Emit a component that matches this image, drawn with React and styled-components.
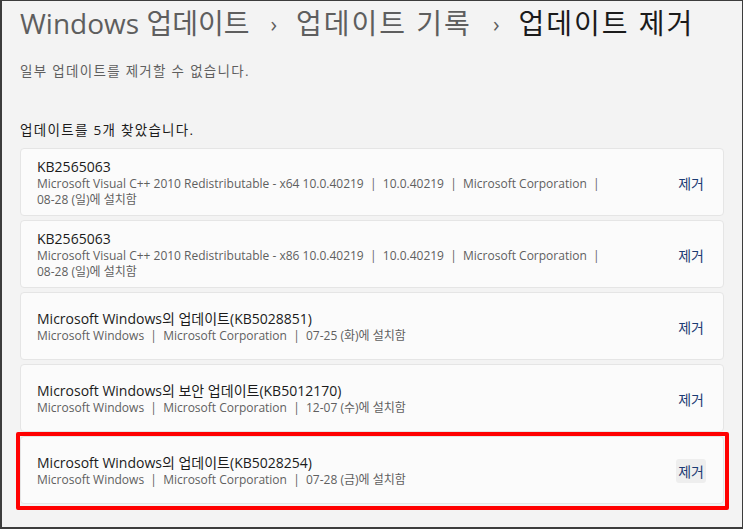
import styled, { createGlobalStyle } from 'styled-components';

const GlobalStyle = createGlobalStyle`
  html, body {
    margin: 0;
    padding: 0;
    background: #f3f3f3;
  }
  body {
    font-family: "Open Sans", "Noto Sans CJK KR", sans-serif;
  }
`;

// 바깥 프레임 (스크린샷 테두리)
const Frame = styled.div`
  width: 743px;
  height: 529px;
  box-sizing: border-box;
  border: 1px solid #3c3c3c;
  border-left-width: 2px;
  border-bottom-width: 2px;
  background: #f3f3f3;
  overflow: hidden;
  padding: 0 18px 0 18px;
`;

const Breadcrumb = styled.h1`
  margin: 0;
  padding: 3px 0 0 0;
  display: flex;
  align-items: center;
  gap: 12px;
  font-weight: 400;
  font-size: 28px;
  line-height: 38px;
  white-space: nowrap;
`;

const Crumb = styled.span`
  color: ${(props) => (props.$current ? '#1b1b1b' : '#5e5e5e')};
  letter-spacing: ${(props) => props.$spacing ?? 2}px;
`;

const Chevron = styled.span`
  color: #5e5e5e;
  font-size: 22px;
  margin: 0 7px 0 9px;
`;

const Note = styled.p`
  margin: 20px 0 0 0;
  font-size: 13.5px;
  letter-spacing: 1.3px;
  color: #5f5f5f;
  line-height: 18px;
`;

const Count = styled.p`
  margin: 41px 0 0 0;
  font-size: 13.5px;
  letter-spacing: 1.3px;
  color: #1b1b1b;
  line-height: 18px;
`;

const List = styled.div`
  margin-top: 9px;
  display: flex;
  flex-direction: column;
  gap: 4px;
`;

const Card = styled.div`
  position: relative;
  height: 68px;
  box-sizing: border-box;
  background: #fbfbfb;
  border: 1px solid #e5e5e5;
  border-radius: 4px;
  display: flex;
  align-items: center;
  padding: 2px 16px 0 16px;

  // 강조 표시
  ${(props) =>
    props.$marked &&
    `
    &::after {
      content: '';
      position: absolute;
      left: -5px;
      right: -6px;
      top: -5px;
      bottom: -7px;
      border: 4px solid #ff0000;
      border-radius: 2px;
    }
  `}
`;

const Info = styled.div`
  flex: 1;
  min-width: 0;
`;

const Name = styled.div`
  font-size: 14px;
  color: #1b1b1b;
  line-height: 18px;
`;

const Detail = styled.div`
  font-size: 12px;
  color: #5f5f5f;
  line-height: 16px;
  max-width: 570px;
  white-space: pre-wrap;
`;

const RemoveBtn = styled.button`
  border: none;
  background: ${(props) => (props.$hover ? '#eeeeee' : 'transparent')};
  border-radius: 3px;
  font-family: "Noto Sans CJK KR", sans-serif;
  font-size: 14px;
  color: #1b3b74;
  padding: 2px 2px;
  margin-right: 1px;
  cursor: pointer;
`;

const updates = [
  {
    name: 'KB2565063',
    detail:
      'Microsoft Visual C++ 2010 Redistributable - x64 10.0.40219  |  10.0.40219  |  Microsoft Corporation  |  08-28 (일)에 설치함',
  },
  {
    name: 'KB2565063',
    detail:
      'Microsoft Visual C++ 2010 Redistributable - x86 10.0.40219  |  10.0.40219  |  Microsoft Corporation  |  08-28 (일)에 설치함',
  },
  {
    name: 'Microsoft Windows의 업데이트(KB5028851)',
    detail: 'Microsoft Windows  |  Microsoft Corporation  |  07-25 (화)에 설치함',
  },
  {
    name: 'Microsoft Windows의 보안 업데이트(KB5012170)',
    detail: 'Microsoft Windows  |  Microsoft Corporation  |  12-07 (수)에 설치함',
  },
  {
    name: 'Microsoft Windows의 업데이트(KB5028254)',
    detail: 'Microsoft Windows  |  Microsoft Corporation  |  07-28 (금)에 설치함',
    marked: true,
  },
];

export default function App() {
  return (
    <>
      <GlobalStyle />
      <Frame>
        <Breadcrumb>
          <Crumb $spacing={0}>Windows 업데이트</Crumb>
          <Chevron>›</Chevron>
          <Crumb>업데이트 기록</Crumb>
          <Chevron>›</Chevron>
          <Crumb $current>업데이트 제거</Crumb>
        </Breadcrumb>
        <Note>일부 업데이트를 제거할 수 없습니다.</Note>
        <Count>업데이트를 5개 찾았습니다.</Count>
        <List>
          {updates.map((u, i) => (
            <Card key={i} $marked={u.marked}>
              <Info>
                <Name>{u.name}</Name>
                <Detail>{u.detail}</Detail>
              </Info>
              <RemoveBtn $hover={u.marked}>제거</RemoveBtn>
            </Card>
          ))}
        </List>
      </Frame>
    </>
  );
}
